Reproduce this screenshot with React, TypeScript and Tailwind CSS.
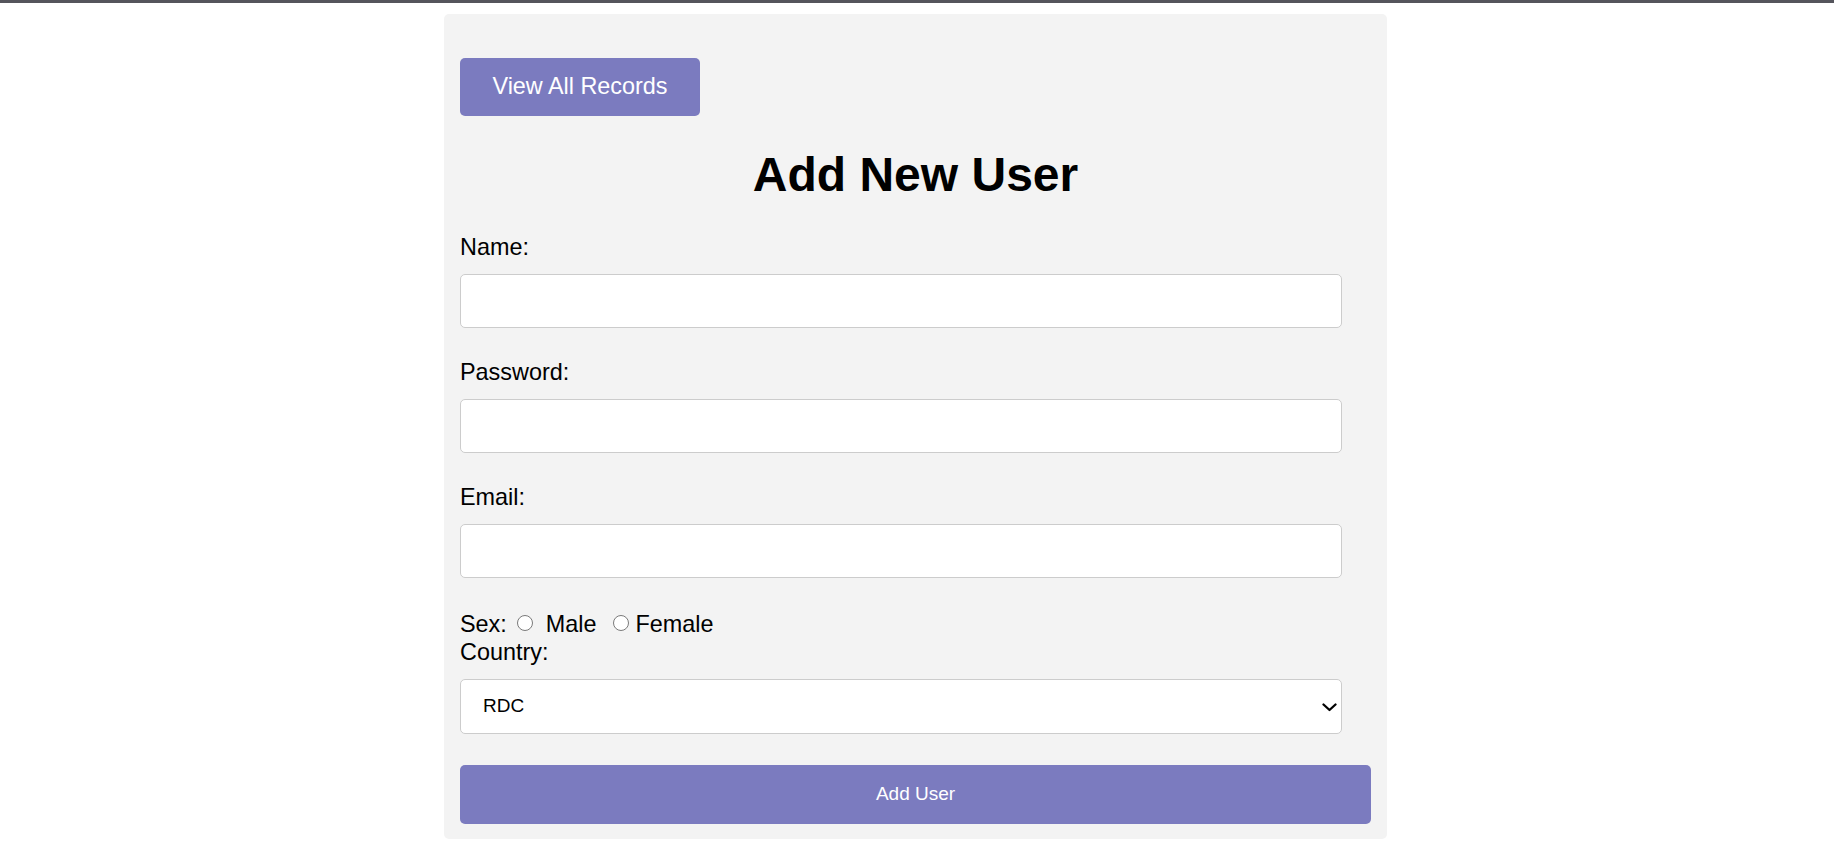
import React from "react";

function Radio() {
  return (
    <span className="inline-block h-[16px] w-[16px] shrink-0 rounded-full border border-[#7a7a7a] bg-white" />
  );
}

export default function App() {
  return (
    <div className="min-h-screen bg-white text-black" style={{ fontFamily: '"Liberation Sans", Arial, sans-serif' }}>
      <div className="h-[3px] bg-[#55555c]" />
      <div className="pr-[3px] pt-[11px]">
        <div className="mx-auto w-[943px] rounded-[5px] bg-[#f3f3f3] px-[16px] pb-[15px] pt-[44px]">
          <button className="h-[58px] w-[240px] rounded-[5px] bg-[#7b7bbf] text-[23.4px] text-white">
            View All Records
          </button>
          <h1 className="mt-[32px] text-center text-[48px] font-bold leading-[54px]">Add New User</h1>

          <label className="mt-[32px] block text-[23.4px] leading-[27px]">Name:</label>
          <div className="mt-[13px] h-[54px] w-[882px] rounded-[5px] border border-[#cccccc] bg-white" />

          <label className="mt-[31px] block text-[23.4px] leading-[27px]">Password:</label>
          <div className="mt-[13px] h-[54px] w-[882px] rounded-[5px] border border-[#cccccc] bg-white" />

          <label className="mt-[31px] block text-[23.4px] leading-[27px]">Email:</label>
          <div className="mt-[13px] h-[54px] w-[882px] rounded-[5px] border border-[#cccccc] bg-white" />

          <div className="mt-[32px] flex h-[28px] items-center text-[23.4px] leading-[27px]">
            <span>Sex:</span>
            <span className="ml-[10px] mt-[-2px] flex"><Radio /></span>
            <span className="ml-[13px]">Male</span>
            <span className="ml-[16px] mt-[-2px] flex"><Radio /></span>
            <span className="ml-[7px]">Female</span>
          </div>
          <label className="mt-[1px] block text-[23.4px] leading-[27px]">Country:</label>

          <div className="relative mt-[13px] h-[55px] w-[882px] rounded-[5px] border border-[#cccccc] bg-white">
            <div className="flex h-full items-center pl-[22px] text-[19px]">RDC</div>
            <svg
              className="absolute right-[4px] top-[23px]"
              width="15"
              height="9"
              viewBox="0 0 15 9"
              fill="none"
            >
              <path d="M1.5 1.5 L7.5 7 L13.5 1.5" stroke="#000" strokeWidth="2.3" strokeLinecap="round" strokeLinejoin="round" />
            </svg>
          </div>

          <button className="mt-[31px] h-[59px] w-full rounded-[5px] bg-[#7b7bbf] text-[19px] text-white">
            Add User
          </button>
        </div>
      </div>
    </div>
  );
}
